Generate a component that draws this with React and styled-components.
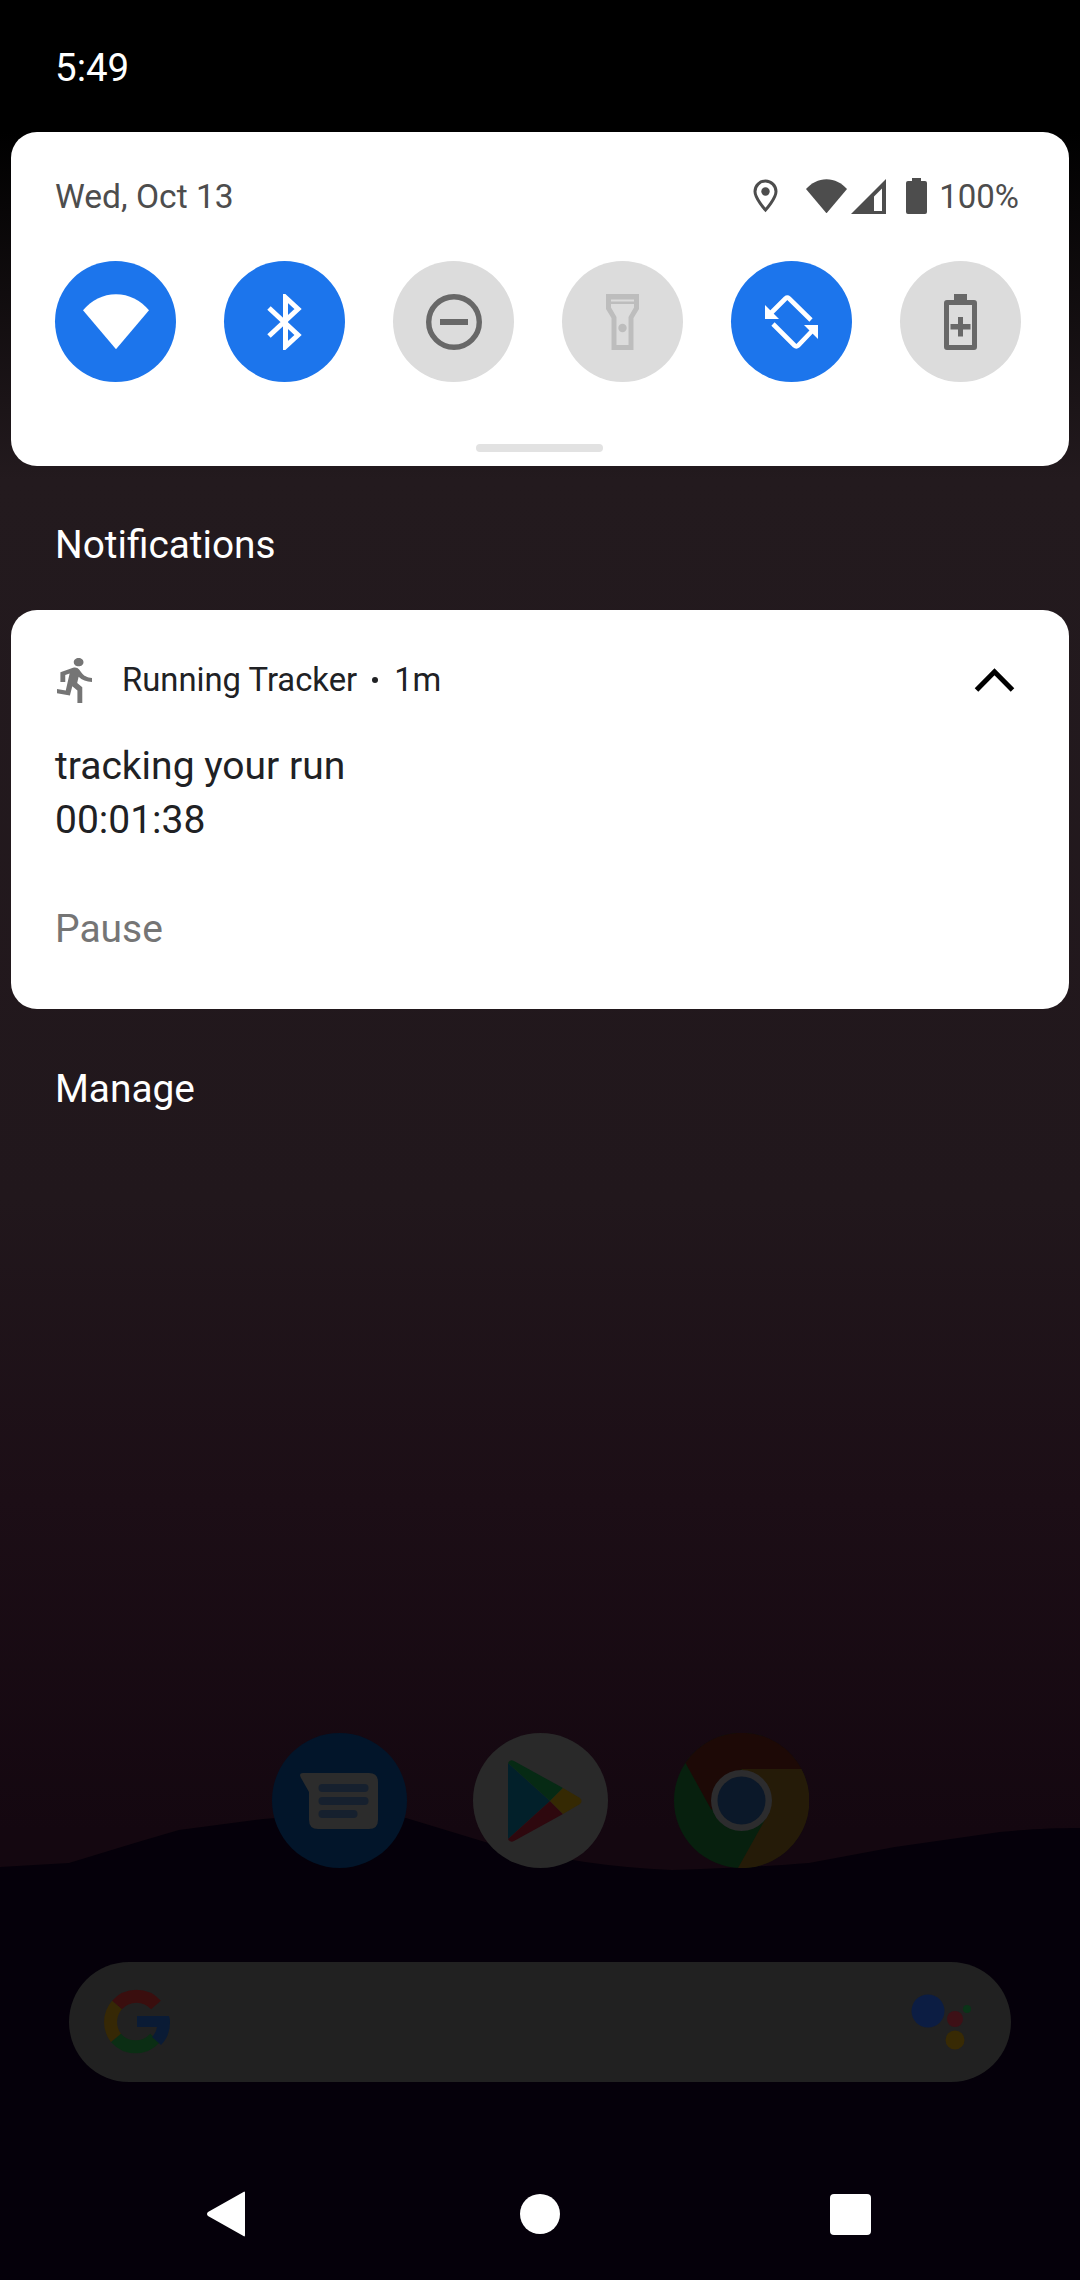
import React from "react";
import styled, { createGlobalStyle } from "styled-components";

const GlobalStyle = createGlobalStyle`
  html, body {
    margin: 0;
    padding: 0;
    background: #000;
  }
  * {
    box-sizing: border-box;
  }
`;

const WifiIcon = ({ size, color }) => (
  <svg width={size} height={size * 0.84} viewBox="0 0 66 55">
    <path d="M0 16C8.500 6 20 0 33 0s24.500 6 33 16L33 55z" fill={color} />
  </svg>
);

const BluetoothIcon = () => (
  <svg width="35" height="56" viewBox="0 0 35 56">
    <path
      d="M2 14L31 41 18.500 52.500V3.500L31 15 2 42"
      fill="none"
      stroke="#fff"
      strokeWidth="5"
    />
  </svg>
);

const DndIcon = () => (
  <svg width="56" height="56" viewBox="0 0 56 56">
    <circle cx="28" cy="28" r="25.300" fill="none" stroke="#686868" strokeWidth="5.400" />
    <rect x="14" y="25" width="28" height="6" fill="#686868" />
  </svg>
);

const FlashIcon = () => (
  <svg width="33" height="56" viewBox="0 0 33 56">
    <path
      fillRule="evenodd"
      d="M0 0h33v15l-5.500 9v32h-22V24L0 15zM5 10v3.500l5.500 9.500v28h12V23l5.500-9.500V10z"
      fill="#bdbdbd"
    />
    <rect x="5" y="5.500" width="23" height="2" fill="#dcdcdc" />
    <circle cx="16.500" cy="34" r="4.200" fill="#bdbdbd" />
  </svg>
);

const RotateIcon = () => (
  <svg width="54" height="54" viewBox="0 0 54 54">
    <path
      d="M5 19L20.500 3.500q1.800-1.600 3.600 0L46 25"
      fill="none"
      stroke="#fff"
      strokeWidth="4.600"
    />
    <path d="M0 10V24H14z" fill="#fff" />
    <path
      d="M8 29L29.500 50.500q1.800 1.600 3.600 0L48 35"
      fill="none"
      stroke="#fff"
      strokeWidth="4.600"
    />
    <path d="M53 44V30H39z" fill="#fff" />
  </svg>
);

const BatteryPlusIcon = () => (
  <svg width="33" height="56" viewBox="0 0 33 56">
    <path
      fillRule="evenodd"
      d="M10 0h13v6h7q3 0 3 3v44q0 3-3 3H3q-3 0-3-3V9q0-3 3-3h7zM5 11v40h23V11z"
      fill="#686868"
    />
    <path d="M14 23h5v7h7.500v5.500H19v7h-5v-7H6.500V30H14z" fill="#686868" />
  </svg>
);

const PinIcon = () => (
  <svg width="25" height="34" viewBox="0 0 25 34">
    <path
      d="M12.500 2C6.700 2 2 6.700 2 12.500 2 19.500 12.500 31 12.500 31S23 19.500 23 12.500C23 6.700 18.300 2 12.500 2z"
      fill="none"
      stroke="#4d4d4d"
      strokeWidth="3"
    />
    <circle cx="12.500" cy="12.500" r="4.200" fill="#4d4d4d" />
  </svg>
);

const SignalIcon = () => (
  <svg width="35" height="35" viewBox="0 0 35 35">
    <path fillRule="evenodd" d="M35 0v35H0zM31 9.500L23 17.500V32h8z" fill="#4d4d4d" />
  </svg>
);

const BatteryIcon = () => (
  <svg width="21" height="36" viewBox="0 0 21 36">
    <path d="M6 0h9v3h4q2 0 2 2v29q0 2-2 2H2q-2 0-2-2V5q0-2 2-2h4z" fill="#4d4d4d" />
  </svg>
);

const RunnerIcon = () => (
  <svg width="35" height="45" viewBox="4.590 1.480 14.400 21.500" preserveAspectRatio="none">
    <path
      d="M13.490 5.480c1.100 0 2-.9 2-2s-.9-2-2-2-2 .9-2 2 .9 2 2 2zm-3.600 13.900l1-4.400 2.100 2v6h2v-7.500l-2.100-2 .6-3c1.300 1.500 3.300 2.500 5.500 2.500v-2c-1.900 0-3.500-1-4.300-2.400l-1-1.600c-.4-.6-1-1-1.700-1-.3 0-.5.100-.8.100l-5.200 2.200v4.700h2v-3.400l1.800-.7-1.600 8.100-4.900-1-.4 2 7 1.400z"
      fill="#757575"
    />
  </svg>
);

const ChevronUp = () => (
  <svg width="41" height="24" viewBox="0 0 41 24">
    <path d="M2.500 22L20.500 3.800 38.500 22" fill="none" stroke="#000" strokeWidth="5" />
  </svg>
);

const MessagesIcon = () => (
  <svg width="78" height="56" viewBox="0 0 78 56">
    <path d="M3 0H69q9 0 9 9V47q0 9-9 9H18q-9 0-9-9V19L.5 4Q-1 0 3 0z" fill="#2c2c2c" />
    <rect x="18.500" y="11" width="50" height="8" rx="4" fill="#16202e" />
    <rect x="18.500" y="24" width="50" height="8" rx="4" fill="#16202e" />
    <rect x="18.500" y="37" width="39" height="8" rx="4" fill="#16202e" />
  </svg>
);

const PlayIcon = () => (
  <svg width="84" height="82" viewBox="-10 0 84 82">
    <path d="M0 3v76l42-38z" fill="#02202a" />
    <path d="M0 3q2-4 6-2l49 27-13 13z" fill="#062a14" />
    <path d="M0 79q2 4 6 2l49-27-13-13z" fill="#2e080e" />
    <path d="M55 28l17 10q3 3 0 6L55 54 42 41z" fill="#352903" />
  </svg>
);

const ChromeIcon = () => (
  <svg width="135" height="135" viewBox="0 0 135 135">
    <circle cx="67.500" cy="67.500" r="67.500" fill="#07200e" />
    <path d="M11.500 30A67.500 67.500 0 0 1 127.500 36H67.500L37.500 77z" fill="#1d0906" />
    <path d="M127.500 36A67.500 67.500 0 0 1 64 135L92.500 84 67.500 36z" fill="#251b08" />
    <circle cx="67.500" cy="67.500" r="30.500" fill="#2c2c2e" />
    <circle cx="67.500" cy="67.500" r="24" fill="#0b1829" />
  </svg>
);

const GoogleIcon = () => (
  <svg width="66" height="66" viewBox="0 0 66 66">
    <g fill="none" strokeWidth="13">
      <path d="M52 16A26 26 0 0 0 13 16" stroke="#3a0e0e" />
      <path d="M13 16a26 26 0 0 0-1 33" stroke="#362805" />
      <path d="M12 49a26 26 0 0 0 39 0" stroke="#0b2e14" />
    </g>
    <path d="M33 27h32q1 3 1 6 0 14-9 23l-9-8q4-4 5-10H33z" fill="#0a1b35" />
  </svg>
);

const AssistantDots = () => (
  <svg width="62" height="62" viewBox="0 0 62 62">
    <circle cx="17" cy="20" r="16.500" fill="#0c1d43" />
    <circle cx="44" cy="28" r="8" fill="#3d1016" />
    <circle cx="44" cy="49" r="9.500" fill="#382a04" />
    <circle cx="56" cy="18" r="4" fill="#0a3418" />
  </svg>
);

const BackIcon = () => (
  <svg width="40" height="46" viewBox="0 0 40 46">
    <path d="M39 1.500V44.500q-.5 1.500-1.500.5L2 25q-2-2 0-4L37.500 1q1-1 1.500.5z" fill="#fff" />
  </svg>
);

const Page = styled.div`
  position: relative;
  width: 1080px;
  height: 2280px;
  overflow: hidden;
  display: flex;
  flex-direction: column;
  font-family: Roboto, "Liberation Sans", sans-serif;
  background: linear-gradient(
    180deg,
    #000 0,
    #000 132px,
    #231a1e 480px,
    #21171c 1200px,
    #1c0e16 1500px,
    #140710 1830px
  );
`;

const Hills = styled.svg`
  position: absolute;
  left: 0;
  bottom: 0;
`;

const StatusBar = styled.div`
  position: relative;
  height: 132px;
  padding: 44px 0 0 55px;
  color: #fff;
  font-size: 38.500px;
  line-height: 48px;
`;

const Card = styled.section`
  position: relative;
  margin: 0 11px;
  background: #fff;
  border-radius: 26px;
`;

const QuickCard = styled(Card)`
  height: 334px;
  padding: 43px 48px 0 44px;
`;

const QuickHeader = styled.div`
  display: flex;
  align-items: center;
  justify-content: space-between;
  height: 42px;
  margin-right: 2px;
`;

const DateText = styled.div`
  font-size: 33.600px;
  color: #4d4d4d;
`;

const StatusIcons = styled.div`
  display: flex;
  align-items: center;
  color: #4d4d4d;
  font-size: 33px;
`;

const IconSlot = styled.span`
  display: flex;
  margin-right: ${({ $gap }) => $gap}px;
`;

const TileRow = styled.div`
  display: flex;
  justify-content: space-between;
  margin-top: 44px;
`;

const Tile = styled.div`
  width: 121px;
  height: 121px;
  border-radius: 50%;
  display: flex;
  align-items: center;
  justify-content: center;
  background: ${({ $on }) => ($on ? "#1c75ec" : "#dcdcdc")};
`;

const Handle = styled.div`
  position: absolute;
  left: 465px;
  bottom: 14px;
  width: 127px;
  height: 8px;
  border-radius: 4px;
  background: #e2e2e2;
`;

const SectionLabel = styled.div`
  color: #fff;
  font-size: 38.800px;
  line-height: 44px;
  padding-left: 55px;
`;

const NotificationsLabel = styled(SectionLabel)`
  margin-top: 57px;
`;

const NotificationCard = styled(Card)`
  height: 399px;
  margin-top: 43px;
  padding: 0 54px 0 44px;
`;

const NotifHeader = styled.div`
  display: flex;
  align-items: center;
  height: 46px;
  margin-top: 47px;
  color: #202124;
  font-size: 32.800px;
`;

const RunnerSlot = styled.span`
  display: flex;
  margin-left: 2px;
`;

const AppName = styled.span`
  margin-left: 30px;
`;

const Dot = styled.span`
  width: 6px;
  height: 6px;
  border-radius: 50%;
  background: #202124;
  margin: 0 16px 0 15px;
`;

const Chevron = styled.span`
  display: flex;
  margin-left: auto;
`;

const NotifBody = styled.div`
  margin-top: 36px;
  color: #202124;
  font-size: 39px;
  line-height: 54px;
`;

const ActionText = styled.div`
  margin-top: 55px;
  color: #757575;
  font-size: 39px;
  line-height: 54px;
`;

const ManageLabel = styled(SectionLabel)`
  margin-top: 58px;
`;

const Dock = styled.div`
  position: relative;
  display: flex;
  justify-content: center;
  gap: 66px;
  margin-top: 622px;
`;

const DockIcon = styled.div`
  width: 135px;
  height: 135px;
  border-radius: 50%;
  display: flex;
  align-items: center;
  justify-content: center;
  background: ${({ $bg }) => $bg};
`;

const SearchBar = styled.div`
  position: relative;
  display: flex;
  align-items: center;
  justify-content: space-between;
  height: 120px;
  margin: 94px 69px 0;
  padding: 0 38px 0 35px;
  border-radius: 60px;
  background: #212121;
`;

const NavBar = styled.div`
  position: relative;
  display: flex;
  align-items: center;
  height: 46px;
  margin-top: 109px;
`;

const NavSlot = styled.div`
  position: absolute;
  left: ${({ $x }) => $x}px;
  display: flex;
`;

const HomeButton = styled.div`
  width: 40px;
  height: 40px;
  border-radius: 50%;
  background: #fff;
`;

const RecentsButton = styled.div`
  width: 41px;
  height: 41px;
  border-radius: 4px;
  background: #fff;
`;

const App = () => (
  <Page>
    <GlobalStyle />
    <Hills width="1080" height="470" viewBox="0 0 1080 470">
      <path
        d="M0 57L69 53L138 32L179 20L255 10C290 6 350 4 406 8L485 32C540 46 600 57 672 60C720 59 770 56 809 53L895 37L1000 22C1030 19 1055 18 1080 18V470H0z"
        fill="#05000a"
      />
    </Hills>
    <StatusBar>5:49</StatusBar>
    <QuickCard>
      <QuickHeader>
        <DateText>Wed, Oct 13</DateText>
        <StatusIcons>
          <IconSlot $gap={28}>
            <PinIcon />
          </IconSlot>
          <IconSlot $gap={4}>
            <WifiIcon size={41} color="#4d4d4d" />
          </IconSlot>
          <IconSlot $gap={20}>
            <SignalIcon />
          </IconSlot>
          <IconSlot $gap={12}>
            <BatteryIcon />
          </IconSlot>
          100%
        </StatusIcons>
      </QuickHeader>
      <TileRow>
        <Tile $on>
          <WifiIcon size={66} color="#fff" />
        </Tile>
        <Tile $on>
          <BluetoothIcon />
        </Tile>
        <Tile>
          <DndIcon />
        </Tile>
        <Tile>
          <FlashIcon />
        </Tile>
        <Tile $on>
          <RotateIcon />
        </Tile>
        <Tile>
          <BatteryPlusIcon />
        </Tile>
      </TileRow>
      <Handle />
    </QuickCard>
    <NotificationsLabel>Notifications</NotificationsLabel>
    <NotificationCard>
      <NotifHeader>
        <RunnerSlot>
          <RunnerIcon />
        </RunnerSlot>
        <AppName>Running Tracker</AppName>
        <Dot />
        <span>1m</span>
        <Chevron>
          <ChevronUp />
        </Chevron>
      </NotifHeader>
      <NotifBody>
        tracking your run
        <br />
        00:01:38
      </NotifBody>
      <ActionText>Pause</ActionText>
    </NotificationCard>
    <ManageLabel>Manage</ManageLabel>
    <Dock>
      <DockIcon $bg="#02152a">
        <MessagesIcon />
      </DockIcon>
      <DockIcon $bg="#292929">
        <PlayIcon />
      </DockIcon>
      <ChromeIcon />
    </Dock>
    <SearchBar>
      <GoogleIcon />
      <AssistantDots />
    </SearchBar>
    <NavBar>
      <NavSlot $x={206}>
        <BackIcon />
      </NavSlot>
      <NavSlot $x={520}>
        <HomeButton />
      </NavSlot>
      <NavSlot $x={830}>
        <RecentsButton />
      </NavSlot>
    </NavBar>
  </Page>
);

export default App;
